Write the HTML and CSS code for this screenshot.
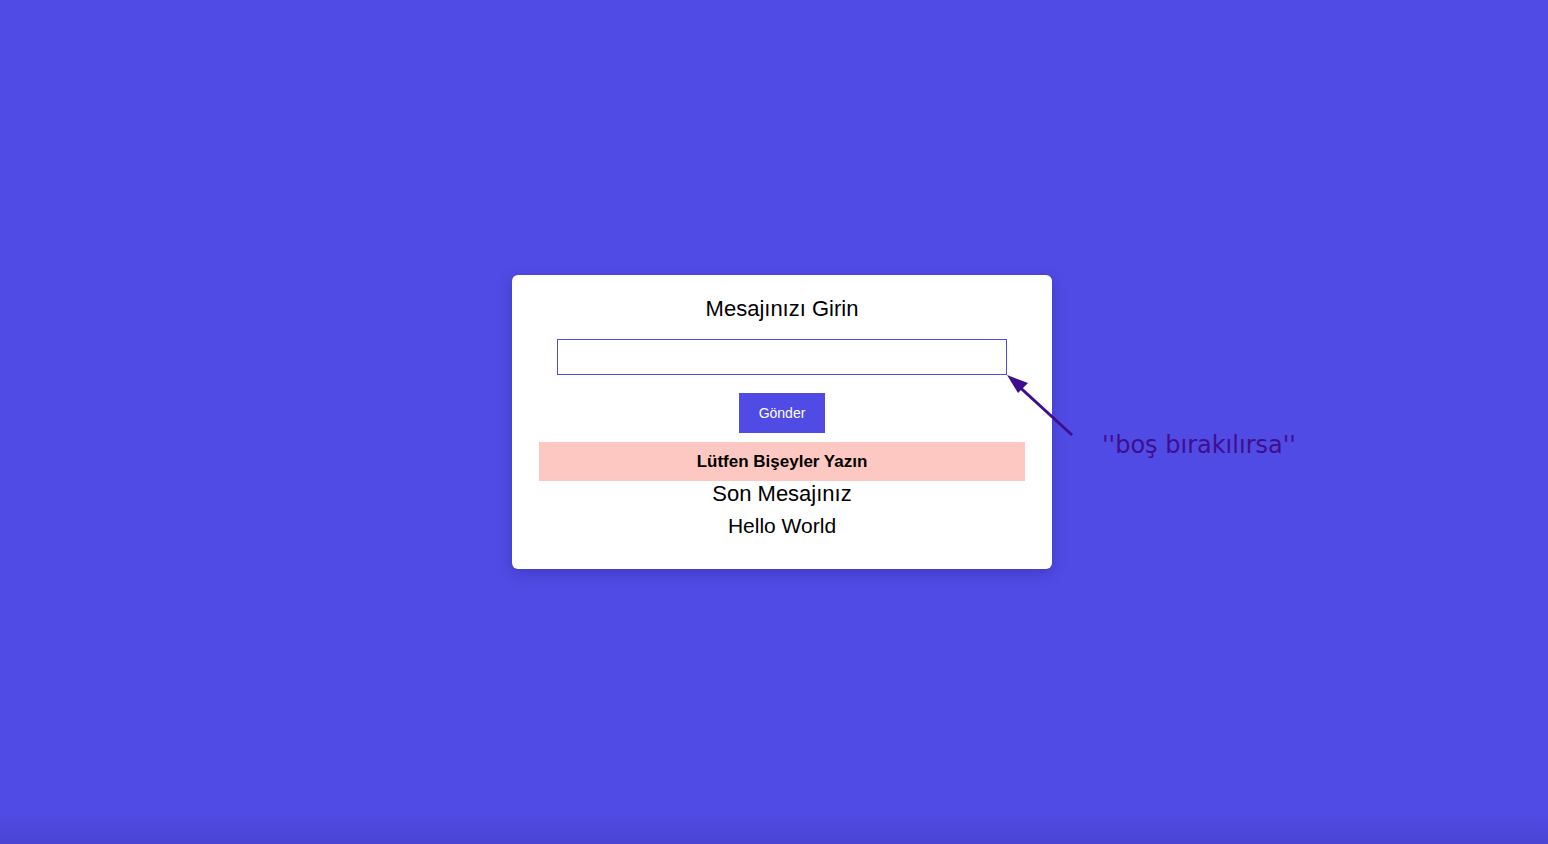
FILE: index.html
```html
<!DOCTYPE html>
<html lang="tr">
<head>
  <meta charset="UTF-8">
  <meta name="viewport" content="width=device-width, initial-scale=1.0">
  <title>Mesaj</title>
  <link rel="stylesheet" href="styles.css">
</head>
<body>
  <div class="wrapper">
    <div class="card">
      <h2 class="card-title">Mesajınızı Girin</h2>
      <input type="text" class="message-input" id="message">
      <button class="send-btn" id="send-btn">Gönder</button>
      <div class="error-box">Lütfen Bişeyler Yazın</div>
      <p class="last-label">Son Mesajınız</p>
      <p class="last-message">Hello World</p>
    </div>

    <!-- annotation arrow pointing at the empty input -->
    <svg class="note-arrow" width="80" height="70" viewBox="0 0 80 70">
      <line x1="72" y1="65" x2="14" y2="12" stroke="#3f0e8e" stroke-width="3"/>
      <polygon points="7,5 18,23 28,13" fill="#3f0e8e"/>
    </svg>
    <div class="note-text">''boş bırakılırsa''</div>
  </div>
</body>
</html>
```

FILE: styles.css
```css
html, body {
  margin: 0;
  padding: 0;
  height: 100%;
}

body {
  font-family: "Liberation Sans", Arial, sans-serif;
  background-color: #514be6;
  background-image: linear-gradient(to bottom, rgba(0, 0, 0, 0) 96%, rgba(0, 0, 0, 0.08));
  display: flex;
  justify-content: center;
  align-items: center;
}

.wrapper {
  position: relative;
  margin-left: 16px;
}

.card {
  width: 486px;
  padding: 20px 27px 31px;
  background-color: #ffffff;
  border-radius: 6px;
  box-shadow: 0 4px 14px rgba(20, 10, 90, 0.25);
  display: flex;
  flex-direction: column;
  align-items: center;
  color: #000;
}

.card-title {
  margin: 0 0 16px;
  font-size: 22px;
  font-weight: normal;
  line-height: 28px;
}

.message-input {
  box-sizing: border-box;
  width: 450px;
  height: 36px;
  margin: 0;
  border: 1px solid #514be6;
  outline: none;
  font-size: 16px;
  padding: 0 8px;
}

.send-btn {
  margin-top: 18px;
  height: 40px;
  padding: 0 20px;
  border: none;
  background-color: #514be6;
  color: #ffffff;
  font-family: "Liberation Sans", Arial, sans-serif;
  font-size: 14px;
  cursor: pointer;
}

.error-box {
  box-sizing: border-box;
  width: 100%;
  height: 39px;
  margin-top: 9px;
  background-color: #fdc8c2;
  font-size: 17px;
  font-weight: bold;
  display: flex;
  align-items: center;
  justify-content: center;
}

.last-label,
.last-message {
  margin: 0;
  font-size: 22px;
  line-height: 25px;
}

.last-message {
  margin-top: 7px;
  font-size: 21px;
}

.note-arrow {
  position: absolute;
  left: 488px;
  top: 95px;
}

.note-text {
  position: absolute;
  left: 590px;
  top: 156px;
  font-family: "DejaVu Sans", Verdana, sans-serif;
  font-size: 24px;
  line-height: 28px;
  color: #3f0e8e;
  white-space: nowrap;
}
```
